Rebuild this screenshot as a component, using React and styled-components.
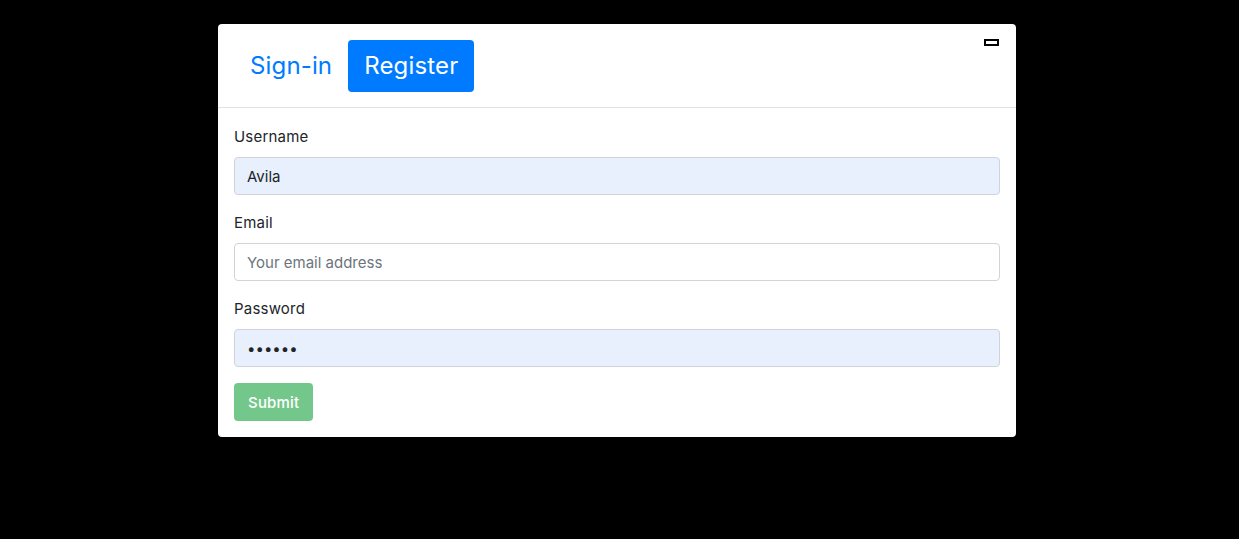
import React from "react";
import styled, { createGlobalStyle } from "styled-components";

const GlobalStyle = createGlobalStyle`
  html, body {
    margin: 0;
    background: #000;
    font-family: "Inter", "Noto Sans", sans-serif;
    color: #212529;
  }
  * { box-sizing: border-box; }
`;

const Page = styled.div`
  padding: 24px 0 0 218px;
  min-height: 539px;
`;

const Card = styled.div`
  position: relative;
  width: 798px;
  background: #fff;
  border-radius: 4px;
`;

const Header = styled.div`
  display: flex;
  padding: 16px 16px 15px;
  border-bottom: 1px solid #dee2e6;
`;

const Tab = styled.button`
  font-family: inherit;
  font-size: 24px;
  line-height: 36px;
  padding: 8px 16px;
  border: none;
  border-radius: 4px;
  cursor: pointer;
  letter-spacing: 0.15px;
  background: ${(p) => (p.active ? "#007bff" : "transparent")};
  color: ${(p) => (p.active ? "#fff" : "#007bff")};
`;

const Close = styled.button`
  position: absolute;
  top: 15px;
  right: 17px;
  width: 15px;
  height: 7px;
  padding: 0;
  background: #fff;
  border: 2px solid #000;
`;

const Body = styled.form`
  padding: 17px 16px 16px;
`;

const Group = styled.div`
  margin-bottom: 16px;
`;

const Label = styled.label`
  display: block;
  font-size: 15px;
  letter-spacing: 0.2px;
  line-height: 24px;
  margin-bottom: 8px;
`;

const Input = styled.input`
  display: block;
  width: 100%;
  height: 38px;
  padding: 6px 12px;
  font-family: inherit;
  font-size: 15px;
  color: #212529;
  background: ${(p) => (p.filled ? "#e8f0fe" : "#fff")};
  border: 1px solid #ced4da;
  border-radius: 4px;
  outline: none;
  &::placeholder { color: #6c757d; }
`;

const Submit = styled.button`
  height: 38px;
  padding: 0 14px;
  font-family: inherit;
  font-size: 15px;
  font-weight: 500;
  letter-spacing: 0.2px;
  color: #fff;
  background: #73c78a;
  border: none;
  border-radius: 4px;
`;

export default function App() {
  return (
    <>
      <GlobalStyle />
      <Page>
        <Card>
          <Header>
            <Tab type="button">Sign-in</Tab>
            <Tab type="button" active>Register</Tab>
          </Header>
          <Close type="button" aria-label="close" />
          <Body onSubmit={(e) => e.preventDefault()}>
            <Group>
              <Label>Username</Label>
              <Input filled defaultValue="Avila" />
            </Group>
            <Group>
              <Label>Email</Label>
              <Input placeholder="Your email address" />
            </Group>
            <Group>
              <Label>Password</Label>
              <Input filled type="password" defaultValue="123456" />
            </Group>
            <Submit type="submit">Submit</Submit>
          </Body>
        </Card>
      </Page>
    </>
  );
}
